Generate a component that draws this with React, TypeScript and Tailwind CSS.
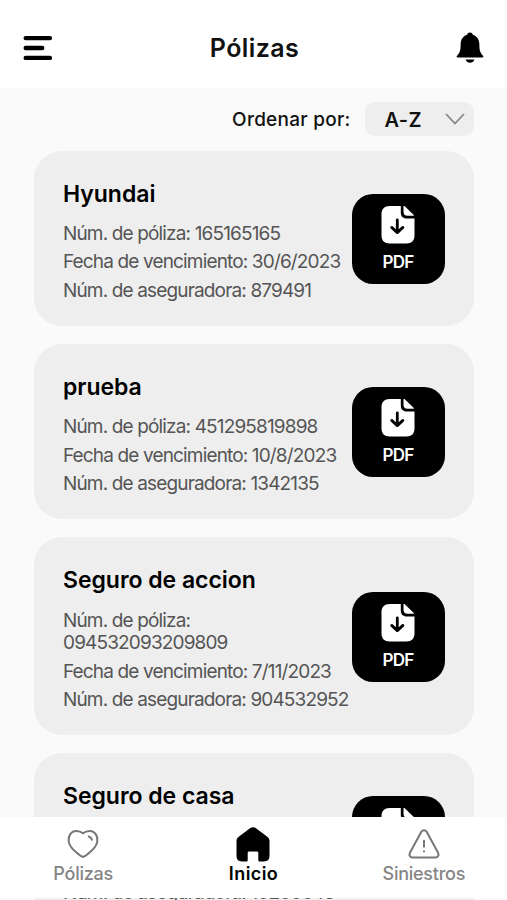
import type { ReactNode } from 'react'

interface Policy {
    name: string
    number: string
    expires: string
    insurer: string
}

const policies: Policy[] = [
    { name: 'Hyundai', number: '165165165', expires: '30/6/2023', insurer: '879491' },
    { name: 'prueba', number: '451295819898', expires: '10/8/2023', insurer: '1342135' },
    { name: 'Seguro de accion', number: '094532093209809', expires: '7/11/2023', insurer: '904532952' },
    { name: 'Seguro de casa', number: '1020345', expires: '12/9/2023', insurer: '10200345' },
]

function MenuIcon() {
    return (
        <svg width="30" height="26" viewBox="0 0 30 26" fill="none" stroke="#000" strokeWidth="4.4" strokeLinecap="round">
            <path d="M2.700 3.100h24.200M2.700 13h16.500M2.700 22.900h24.200" />
        </svg>
    )
}

function BellIcon() {
    return (
        <svg width="28" height="32" viewBox="0 0 28 32" fill="#000">
            <path d="M14 .6c-1.500 0-2.500.9-2.800 2.100C7.200 3.900 5 7.200 4.700 11.200l-.2 4.800c-.1 2.200-.7 4-2 5.900L.8 24c-.5.700-.1 1.500.8 1.500h24.800c.9 0 1.300-.8.800-1.500l-1.700-2.100c-1.300-1.900-1.900-3.700-2-5.900l-.2-4.800c-.3-4-2.500-7.300-6.500-8.500C16.500 1.500 15.500.6 14 .6z" />
            <path d="M9.600 27.500h8.800c-.6 2-2.200 3.300-4.400 3.300s-3.800-1.300-4.400-3.300z" />
        </svg>
    )
}

function PdfIcon() {
    return (
        <svg width="34" height="38" viewBox="0 0 34 38" fill="none">
            <path d="M8.500 0h11.300v6.500c0 3.800 2 6 6 6h7.700v17c0 5-3 8-8 8h-17c-5 0-8-3-8-8V8c0-5 3-8 8-8z" fill="#fff" />
            <path d="M22.500.4v5.300c0 2.700 1.300 4 4 4h6c.5 0 .6-.4.300-.8L23.500.1c-.4-.3-1-.3-1 .3z" fill="#fff" />
            <path d="M16.300 14v12M10.700 21.400l5.600 5.200 5.600-5.200" stroke="#000" strokeWidth="2.800" strokeLinecap="round" strokeLinejoin="round" />
        </svg>
    )
}

function HeartIcon() {
    return (
        <svg width="32" height="30" viewBox="0 0 32 30" fill="none" stroke="#777" strokeWidth="2" strokeLinecap="round" strokeLinejoin="round">
            <path d="M16 28C14.500 27.700 3.800 20.500 2 13.700.6 7.200 4 1.900 9.200 1.900c2.800 0 5 .8 6.800 2.400 1.800-1.600 4-2.400 6.800-2.400 5.200 0 8.600 5.300 7.200 11.800C28.200 20.500 17.500 27.700 16 28z" />
            <path d="M21.800 7.500c1.600.5 2.700 1.500 3.200 3.200" />
        </svg>
    )
}

function HomeIcon() {
    return (
        <svg width="34" height="35" viewBox="0 0 34 35" fill="#000">
            <path d="M14 1.200c2-1.300 4-1.300 6 0l11 8.200c1.700 1.300 2.500 2.600 2.500 4.800v14.600c0 3.800-1.900 5.700-5.700 5.700h-4c-1 0-1.500-.5-1.500-1.500v-7c0-1-.6-1.500-1.600-1.500h-7.400c-1 0-1.600.5-1.600 1.500v7c0 1-.5 1.500-1.500 1.500h-4C2.400 34.500.5 32.600.5 28.800V14.200c0-2.200.8-3.500 2.500-4.800z" />
        </svg>
    )
}

function WarningIcon() {
    return (
        <svg width="32" height="30" viewBox="0 0 32 30" fill="none" stroke="#777" strokeWidth="2" strokeLinecap="round" strokeLinejoin="round">
            <path d="M13.500 2.500c1.200-1.800 3.800-1.800 5 0l11.600 21.300c1 2.200-.1 4.700-2.700 4.700H4.600c-2.600 0-3.700-2.500-2.700-4.700z" />
            <path d="M16 11.800v6M16 22.300v.2" />
        </svg>
    )
}

function PolicyCard({ policy }: { policy: Policy }) {
    return (
        <article className="flex items-center justify-between rounded-[28px] bg-[#eeeeee] pt-[27.500px] pr-[29px] pb-[23.400px] pl-[29.500px]">
            <div className="w-[287px] text-[19px] leading-[22.800px] tracking-[-0.850px] text-[#555]">
                <h2 className="mb-[13.500px] pt-[0.500px] text-[23px] leading-[31px] font-semibold tracking-[-0.030px] text-black">
                    {policy.name}
                </h2>
                <p className="mb-[5.600px]">Núm. de póliza: {policy.number}</p>
                <p className="mb-[5.600px]">Fecha de vencimiento: {policy.expires}</p>
                <p className="whitespace-nowrap">Núm. de aseguradora: {policy.insurer}</p>
            </div>
            <button className="mb-[3px] flex h-[90px] w-[93px] shrink-0 flex-col items-center rounded-[21px] bg-black pt-[12px] text-[17px] leading-[20px] font-semibold tracking-[-0.700px] text-white">
                <PdfIcon />
                <span className="mt-[8px]">PDF</span>
            </button>
        </article>
    )
}

interface TabProps {
    icon: ReactNode
    label: string
    active?: boolean
}

function Tab({ icon, label, active }: TabProps) {
    return (
        <div
            className={`flex flex-1 flex-col items-center ${active ? 'font-semibold tracking-[0.400px] text-black' : 'font-medium tracking-[-0.250px] text-[#858585]'}`}
        >
            <div className="flex h-[36px] items-center">{icon}</div>
            <span className="text-[18px] leading-[24px]">{label}</span>
        </div>
    )
}

export default function App() {
    return (
        <div className="relative h-[900px] w-[507px] overflow-hidden bg-[#fafafa] font-['Inter',sans-serif]">
            <header className="flex h-[88px] items-center justify-between bg-white px-[23px] pt-[8px]">
                <MenuIcon />
                <h1 className="pt-[2px] text-[25px] font-semibold tracking-[0.400px] text-[#111]">Pólizas</h1>
                <BellIcon />
            </header>
            <main className="px-[33.500px]">
                <div className="flex h-[62.500px] items-center justify-end gap-[14px] text-[19px] font-medium text-[#111]">
                    <span className="pt-px tracking-[0.250px]">Ordenar por:</span>
                    <button className="flex h-[34px] w-[109px] items-center justify-between rounded-[10px] bg-[#eeeeee] pr-[9px] pl-[20px]">
                        <span className="pt-0.5 text-[20px] font-semibold tracking-[0.400px]">A-Z</span>
                        <svg width="20" height="12" viewBox="0 0 20 12" fill="none" stroke="#888" strokeWidth="1.800">
                            <path d="M1 1l9 9.500L19 1" />
                        </svg>
                    </button>
                </div>
                <div className="flex flex-col gap-[17.800px]">
                    {policies.map((policy) => (
                        <PolicyCard key={policy.name} policy={policy} />
                    ))}
                </div>
            </main>
            <nav className="absolute -inset-x-[2px] top-[817px] flex h-[81px] bg-white pt-[9px]">
                <Tab icon={<HeartIcon />} label="Pólizas" />
                <Tab icon={<HomeIcon />} label="Inicio" active />
                <Tab icon={<WarningIcon />} label="Siniestros" />
            </nav>
        </div>
    )
}
